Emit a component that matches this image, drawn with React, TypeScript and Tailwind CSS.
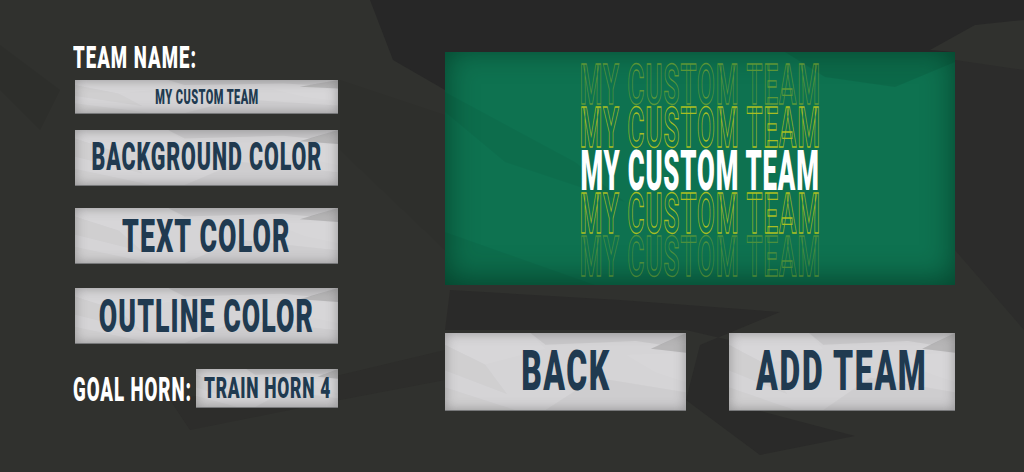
import React from "react";

const font = "[font-family:Roboto,'Liberation_Sans',sans-serif] uppercase leading-none whitespace-nowrap";
const heavy = "font-black " + font;

function Shards() {
  return (
    <svg className="absolute inset-0 w-full h-full" viewBox="0 0 240 78" preserveAspectRatio="none">
      <polygon points="85,0 240,0 215,12 190,8 150,10 100,12" fill="#000" fillOpacity="0.06" />
      <polygon points="205,16 240,0 240,20" fill="#000" fillOpacity="0.14" />
      <polygon points="0,12 40,32 62,62 0,38" fill="#000" fillOpacity="0.025" />
      <polygon points="0,55 70,78 0,78" fill="#000" fillOpacity="0.025" />
      <polygon points="100,78 150,45 240,60 240,78" fill="#000" fillOpacity="0.03" />
      <polygon points="180,22 240,20 240,50 210,40" fill="#fff" fillOpacity="0.06" />
      <polygon points="0,0 85,0 100,16 40,32 0,12" fill="#fff" fillOpacity="0.06" />
    </svg>
  );
}

function Plate({ className, children }: { className: string; children: React.ReactNode }) {
  return (
    <div className={"relative flex items-center justify-center overflow-hidden bg-[#d5d4d6] border-b border-[#77787a] " + className}>
      <Shards />
      <div className="absolute inset-0 shadow-[inset_0_0_12px_rgba(70,70,70,0.45)]" />
      <span className="relative flex justify-center text-[#203a50]">{children}</span>
    </div>
  );
}

function Preview() {
  const outline = font + " font-bold text-transparent text-[56px] scale-x-[0.46] tracking-[0.042em] [-webkit-text-stroke:1.3px_#a8be22] ";
  const rows = [
    outline + "opacity-50",
    outline,
    heavy + " text-white text-[56px] scale-x-[0.46] tracking-[0.032em]",
    outline,
    outline + "opacity-40",
  ];
  return (
    <div className="relative w-[510px] h-[233px] bg-[#0e7250] overflow-hidden flex flex-col items-center justify-center pt-[5px]">
      <svg className="absolute inset-0 w-full h-full" viewBox="0 0 510 233" preserveAspectRatio="none">
        <polygon points="0,40 130,110 180,150 60,110 0,60" fill="#000" fillOpacity="0.04" />
        <polygon points="340,0 510,0 510,10 450,35 380,25" fill="#000" fillOpacity="0.08" />
        <polygon points="0,180 150,233 0,233" fill="#000" fillOpacity="0.04" />
      </svg>
      <div className="absolute inset-0 shadow-[inset_0_-4px_30px_rgba(0,40,25,0.65)]" />
      {rows.map((c, i) => (
        <div key={i} className={"relative h-[43px] flex items-center justify-center " + c}>
          MY CUSTOM TEAM
        </div>
      ))}
    </div>
  );
}

export default function App() {
  return (
    <div className="relative w-[1024px] h-[472px] overflow-hidden bg-[#30312e] flex">
      <svg className="absolute inset-0 w-full h-full" viewBox="0 0 1024 472">
        <polygon points="370,0 393,60 445,90 445,200 955,200 955,52 930,50 975,25 1024,20 1024,0" fill="#272727" />
        <polygon points="955,60 1024,70 1024,330 955,250" fill="#2c2c2b" />
        <polygon points="450,290 620,300 780,312 700,345 686,400 760,455 855,436 760,411 729,340 686,330 445,330" fill="#2a2a29" />
        <polygon points="170,400 340,375 445,350 445,380 340,400 190,430" fill="#2d2d2b" />
        <polygon points="0,45 60,90 40,130 0,90" fill="#2d2e2b" />
        <polygon points="340,80 445,115 445,250 340,150" fill="#2e2f2c" />
      </svg>

      <div className="relative w-[445px] pl-[75px] pr-[107px] pt-[44px] flex flex-col">
        <div className={"h-[26px] flex items-center text-white -ml-[2px] origin-left scale-x-[0.6] tracking-[0.054em] " + heavy + " text-[31px]"}>TEAM NAME:</div>
        <Plate className="h-[34px] mt-[10px]">
          <span className={heavy + " text-[20px] scale-x-[0.55] tracking-[0.04em]"}>MY CUSTOM TEAM</span>
        </Plate>
        <Plate className="h-[56px] mt-[16px]">
          <span className={heavy + " text-[39px] scale-x-[0.55] tracking-[0.042em]"}>BACKGROUND COLOR</span>
        </Plate>
        <Plate className="h-[56px] mt-[22px]">
          <span className={heavy + " text-[46px] scale-x-[0.58] tracking-[0.044em]"}>TEXT COLOR</span>
        </Plate>
        <Plate className="h-[56px] mt-[24px]">
          <span className={heavy + " text-[46px] scale-x-[0.58] tracking-[0.04em]"}>OUTLINE COLOR</span>
        </Plate>
        <div className="flex items-center justify-between mt-[25px] h-[39px]">
          <div className={"w-[117px] -ml-[2px] text-white origin-left scale-x-[0.55] tracking-[0.048em] " + heavy + " text-[34px]"}>GOAL HORN:</div>
          <Plate className="w-[142px] h-[39px]">
            <span className={heavy + " text-[30px] scale-x-[0.58] tracking-[0.042em]"}>TRAIN HORN 4</span>
          </Plate>
        </div>
      </div>

      <div className="relative w-[510px] pt-[52px] flex flex-col">
        <Preview />
        <div className="flex justify-between mt-[48px]">
          <Plate className="w-[241px] h-[78px]">
            <span className={heavy + " text-[55px] scale-x-[0.58] tracking-[0.046em]"}>BACK</span>
          </Plate>
          <Plate className="w-[226px] h-[78px]">
            <span className={heavy + " text-[55px] scale-x-[0.58] tracking-[0.054em]"}>ADD TEAM</span>
          </Plate>
        </div>
      </div>
    </div>
  );
}
